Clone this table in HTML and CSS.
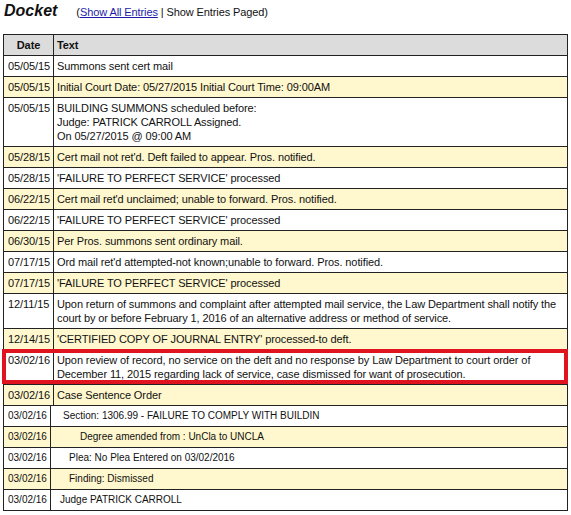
FILE: index.html
```html
<!DOCTYPE html>
<html lang="en">
<head>
<meta charset="utf-8">
<title>Docket</title>
<link rel="stylesheet" href="styles.css">
</head>
<body>
<div class="page">
  <div class="title-bar">
    <h1 class="title">Docket</h1>
    <span class="view-links">(<a href="#" class="link">Show All Entries</a> | Show Entries Paged)</span>
  </div>
  <div class="docket">
    <table class="docket-table">
      <colgroup><col class="col-date"><col class="col-text"></colgroup>
      <thead>
        <tr><th class="th-date">Date</th><th class="th-text">Text</th></tr>
      </thead>
      <tbody>
        <tr><td class="date">05/05/15</td><td>Summons sent cert mail</td></tr>
        <tr class="alt"><td class="date">05/05/15</td><td>Initial Court Date: 05/27/2015 Initial Court Time: 09:00AM</td></tr>
        <tr><td class="date">05/05/15</td><td>BUILDING SUMMONS scheduled before:<br>Judge: PATRICK CARROLL Assigned.<br>On 05/27/2015 @ 09:00 AM</td></tr>
        <tr class="alt"><td class="date">05/28/15</td><td>Cert mail not ret'd. Deft failed to appear. Pros. notified.</td></tr>
        <tr><td class="date">05/28/15</td><td>'FAILURE TO PERFECT SERVICE' processed</td></tr>
        <tr class="alt"><td class="date">06/22/15</td><td>Cert mail ret'd unclaimed; unable to forward. Pros. notified.</td></tr>
        <tr><td class="date">06/22/15</td><td>'FAILURE TO PERFECT SERVICE' processed</td></tr>
        <tr class="alt"><td class="date">06/30/15</td><td>Per Pros. summons sent ordinary mail.</td></tr>
        <tr><td class="date">07/17/15</td><td>Ord mail ret'd attempted-not known;unable to forward. Pros. notified.</td></tr>
        <tr class="alt"><td class="date">07/17/15</td><td>'FAILURE TO PERFECT SERVICE' processed</td></tr>
        <tr><td class="date">12/11/15</td><td>Upon return of summons and complaint after attempted mail service, the Law Department shall notify the court by or before February 1, 2016 of an alternative address or method of service.</td></tr>
        <tr class="alt"><td class="date">12/14/15</td><td>'CERTIFIED COPY OF JOURNAL ENTRY' processed-to deft.</td></tr>
        <tr><td class="date">03/02/16</td><td>Upon review of record, no service on the deft and no response by Law Department to court order of December 11, 2015 regarding lack of service, case dismissed for want of prosecution.</td></tr>
        <tr class="alt"><td class="date">03/02/16</td><td>Case Sentence Order</td></tr>
      </tbody>
    </table>
    <table class="docket-table sub-table">
      <colgroup><col class="col-date-sub"><col class="col-text"></colgroup>
      <tbody>
        <tr><td class="date">03/02/16</td><td class="ind-2">Section: 1306.99 - FAILURE TO COMPLY WITH BUILDIN</td></tr>
        <tr class="alt"><td class="date">03/02/16</td><td class="ind-4">Degree amended from : UnCla to UNCLA</td></tr>
        <tr><td class="date">03/02/16</td><td class="ind-3">Plea: No Plea Entered on 03/02/2016</td></tr>
        <tr class="alt"><td class="date">03/02/16</td><td class="ind-3">Finding: Dismissed</td></tr>
        <tr><td class="date">03/02/16</td><td class="ind-1">Judge PATRICK CARROLL</td></tr>
      </tbody>
    </table>
    <div class="highlight-box"></div>
  </div>
</div>
</body>
</html>
```
FILE: styles.css
```css
body {
  margin: 0;
  background: #ffffff;
  font-family: "Liberation Sans", Arial, sans-serif;
  color: #111111;
}

.page {
  padding: 1px 0 0 3px;
}

.title-bar {
  display: flex;
  align-items: baseline;
  gap: 19px;
  height: 20px;
  padding-left: 1px;
}

.title {
  margin: 0;
  font-size: 16px;
  font-weight: bold;
  font-style: italic;
  line-height: 20px;
  color: #111111;
}

.view-links {
  font-size: 11px;
  letter-spacing: -0.1px;
  color: #111111;
}

.link {
  color: #1c1ca8;
  text-decoration: underline;
}

.docket {
  position: relative;
  margin-top: 13px;
  width: 565px;
}

.docket-table {
  width: 565px;
  border-collapse: collapse;
  table-layout: fixed;
  font-size: 11px;
  letter-spacing: -0.1px;
  line-height: 14px;
}

.col-date {
  width: 50px;
}

.col-date-sub {
  width: 47px;
}

.docket-table th,
.docket-table td {
  border: 1px solid #222222;
  padding: 3px 3px;
  vertical-align: top;
  text-align: left;
  background: #ffffff;
}

.docket-table th {
  background: #dcdcdc;
  font-weight: bold;
}

.docket-table .th-date {
  text-align: center;
}

.docket-table .date {
  padding-left: 4px;
  padding-right: 2px;
  white-space: nowrap;
}

.docket-table tr.alt td {
  background: #fff7cd;
}

.sub-table {
  font-size: 10px;
  letter-spacing: 0;
}

.sub-table tr:first-child td {
  border-top: none;
}

.sub-table .ind-1 { padding-left: 9px; }
.sub-table .ind-2 { padding-left: 12px; }
.sub-table .ind-3 { padding-left: 18px; }
.sub-table .ind-4 { padding-left: 29px; }

.highlight-box {
  position: absolute;
  left: -1px;
  top: 315px;
  width: 566px;
  height: 35px;
  box-sizing: border-box;
  border: 4px solid #e0141e;
  pointer-events: none;
}
```
